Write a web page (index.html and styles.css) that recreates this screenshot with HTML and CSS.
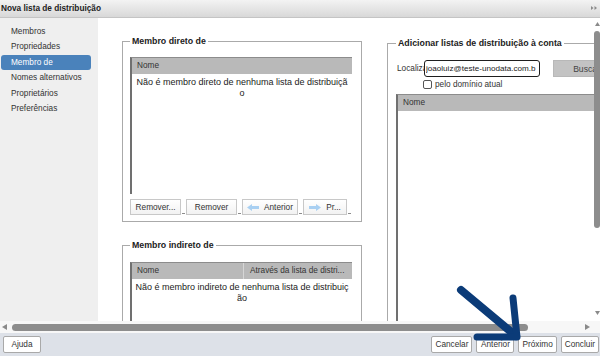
FILE: index.html
```html
<!DOCTYPE html>
<html lang="pt">
<head>
  <meta charset="UTF-8">
  <meta name="viewport" content="width=device-width, initial-scale=1.0">
  <title>Nova lista de distribuição</title>
  <link rel="stylesheet" href="styles.css">
</head>
<body>

<div class="window">
  <div class="titlebar">
    <span>Nova lista de distribuição</span>
    <svg class="collapse" width="6" height="4" viewBox="0 0 6 4">
      <polygon points="0,0 2.5,2 0,4" fill="#8a8a8a"/>
      <polygon points="3.5,0 6,2 3.5,4" fill="#8a8a8a"/>
    </svg>
  </div>

  <div class="body">
    <ul class="nav">
      <li>Membros</li>
      <li>Propriedades</li>
      <li class="active">Membro de</li>
      <li>Nomes alternativos</li>
      <li>Proprietários</li>
      <li>Preferências</li>
    </ul>

    <div class="main">
      <div class="content">
        <div class="col-left">
          <fieldset class="group direct">
            <legend>Membro direto de</legend>
            <div class="list list-direct">
              <div class="list-head">
                <div class="cell">Nome</div>
              </div>
              <div class="list-body">Não é membro direto de nenhuma lista de distribuiçã<br>o</div>
            </div>
            <div class="toolbar">
              <button class="tool-btn">Remover...</button>
              <span class="sep"></span>
              <button class="tool-btn">Remover</button>
              <span class="sep"></span>
              <button class="tool-btn nav-prev">
                <svg width="12" height="7" viewBox="0 0 12 7"><polygon points="0,3.5 5,0 5,2 12,2 12,5 5,5 5,7" fill="#a9d0f2"/></svg>
                Anterior
              </button>
              <span class="sep"></span>
              <button class="tool-btn nav-next">
                <svg width="12" height="7" viewBox="0 0 12 7"><polygon points="12,3.5 7,0 7,2 0,2 0,5 7,5 7,7" fill="#a9d0f2"/></svg>
                Pr...
              </button>
              <span class="sep"></span>
            </div>
          </fieldset>

          <fieldset class="group indirect">
            <legend>Membro indireto de</legend>
            <div class="list list-indirect">
              <div class="list-head">
                <div class="cell cell-name">Nome</div>
                <div class="cell cell-via">Através da lista de distri...</div>
              </div>
              <div class="list-body">Não é membro indireto de nenhuma lista de distribuiç<br>ão</div>
            </div>
          </fieldset>
        </div>

        <div class="col-right">
          <fieldset class="group add">
            <legend>Adicionar listas de distribuição à conta</legend>
            <div class="search-row">
              <label class="search-label" for="query">Localizar:</label>
              <input id="query" class="search-input" type="text" value="joaoluiz@teste-unodata.com.b" spellcheck="false">
              <button class="search-btn">Buscar</button>
            </div>
            <div class="check-row">
              <input id="domain" type="checkbox">
              <label for="domain">pelo domínio atual</label>
            </div>
            <div class="list list-results">
              <div class="list-head">
                <div class="cell">Nome</div>
              </div>
              <div class="list-body"></div>
            </div>
          </fieldset>
        </div>
      </div>

      <div class="vscroll">
        <svg width="5" height="4" viewBox="0 0 5 4"><polygon points="2.5,0 5,4 0,4" fill="#8a8a8a"/></svg>
        <div class="vthumb"></div>
        <svg class="down" width="5" height="4" viewBox="0 0 5 4"><polygon points="0,0 5,0 2.5,4" fill="#8a8a8a"/></svg>
      </div>
    </div>
  </div>

  <div class="hscroll">
    <svg width="5" height="6" viewBox="0 0 5 6"><polygon points="0,3 5,0 5,6" fill="#8a8a8a"/></svg>
    <div class="hthumb"></div>
    <svg class="right" width="5" height="6" viewBox="0 0 5 6"><polygon points="5,3 0,0 0,6" fill="#8a8a8a"/></svg>
  </div>

  <div class="footer">
    <button class="dlg-btn">Ajuda</button>
    <div class="actions">
      <button class="dlg-btn">Cancelar</button>
      <button class="dlg-btn">Anterior</button>
      <button class="dlg-btn">Próximo</button>
      <button class="dlg-btn">Concluir</button>
    </div>
  </div>

  <!-- annotation arrow drawn over the dialog -->
  <svg class="pointer" width="80" height="70" viewBox="0 0 80 70">
    <g fill="none" stroke="#0b3b78" stroke-linecap="round" stroke-linejoin="round">
      <path d="M11 10 L66 56" stroke-width="8"/>
      <path d="M63 18 L67 57 L27 57" stroke-width="7"/>
    </g>
  </svg>
</div>

</body>
</html>
```

FILE: styles.css
```css
* {
  box-sizing: border-box;
}

body {
  margin: 0;
  font-family: "Liberation Sans", Arial, sans-serif;
  color: #333;
  background: #fff;
}

.window {
  position: relative;
  width: 600px;
  height: 356px;
  display: flex;
  flex-direction: column;
  overflow: hidden;
}

.titlebar {
  height: 18px;
  flex-shrink: 0;
  display: flex;
  align-items: center;
  justify-content: space-between;
  padding: 0 3px 1px 1px;
  background: linear-gradient(#f3f3f3, #d8d8d8);
  border-bottom: 1px solid #c4c4c4;
  font-size: 8.25px;
  font-weight: bold;
  color: #222;
}

.body {
  flex: 1;
  display: flex;
  overflow: hidden;
}

.nav {
  width: 98px;
  flex-shrink: 0;
  margin: 0;
  padding: 5.5px 0 0;
  list-style: none;
  background: #efefef;
}

.nav li {
  width: 90px;
  height: 15.6px;
  margin-left: 1px;
  padding-left: 10px;
  line-height: 15.6px;
  font-size: 8.25px;
  color: #333;
  border-radius: 3px;
}

.nav li.active {
  background: #4a82bb;
  color: #fff;
}

.main {
  flex: 1;
  display: flex;
  overflow: hidden;
}

.content {
  flex: 1;
  display: flex;
  align-items: flex-start;
  overflow: hidden;
}

.col-left {
  width: 240px;
  margin-left: 24px;
  flex-shrink: 0;
}

.col-right {
  width: 250px;
  margin-left: 25px;
  flex-shrink: 0;
}

.group {
  margin: 0;
  min-width: 0;
  border: 1px solid #aaa;
  padding: 10px 9px 6px 7px;
}

.group legend {
  padding: 0 2px;
  font-size: 8.8px;
  font-weight: bold;
  line-height: 12px;
  color: #222;
}

.direct {
  margin-top: 17px;
}

.indirect {
  margin-top: 17px;
  padding-top: 11px;
  height: 120px;
}

.add {
  margin-top: 19px;
  padding: 11px 0 0 8px;
}

.list {
  border-left: 2px solid #707070;
  border-top: 1px solid #8c8c8c;
  background: #fff;
}

.list-head {
  height: 16px;
  display: flex;
  background: #b9b9b9;
  font-size: 8.25px;
  line-height: 16px;
  color: #333;
}

.list-head .cell {
  padding-left: 5px;
}

.list-head .cell-name {
  width: 111px;
}

.list-head .cell-via {
  flex: 1;
  padding-left: 6px;
  border-left: 1px solid #d6d6d6;
}

.list-body {
  padding-top: 3px;
  text-align: center;
  font-size: 9px;
  line-height: 11px;
  color: #222;
  white-space: nowrap;
}

.list-direct .list-body {
  height: 120px;
}

.list-indirect .list-body {
  height: 60px;
}

.list-results .list-body {
  height: 240px;
}

.toolbar {
  display: flex;
  align-items: flex-end;
  margin-top: 5px;
}

.tool-btn {
  width: 52px;
  height: 16px;
  padding: 0;
  display: flex;
  align-items: center;
  justify-content: center;
  gap: 5px;
  border: 1px solid #c8c8c8;
  background: linear-gradient(#fff, #f2f2f2);
  font-family: inherit;
  font-size: 8.25px;
  color: #333;
}

.tool-btn.nav-prev {
  width: 57px;
}

.tool-btn.nav-next {
  width: 45px;
}

.sep {
  width: 5px;
  height: 3px;
  display: flex;
  justify-content: center;
}

.sep::after {
  content: "";
  width: 3px;
  height: 1px;
  margin-top: 1px;
  background: #8c8c8c;
}

.search-row {
  display: flex;
  align-items: center;
  height: 17px;
}

.search-label {
  width: 28px;
  padding-left: 1px;
  overflow: hidden;
  white-space: nowrap;
  font-size: 8.25px;
  color: #333;
}

.search-input {
  width: 116px;
  height: 17px;
  margin: 0;
  padding: 0 0 0 1px;
  border: 1.5px solid #1e1e1e;
  border-radius: 3px;
  font-family: inherit;
  font-size: 8.1px;
  color: #222;
  outline: none;
}

.search-btn {
  width: 67px;
  height: 17px;
  margin-left: 13px;
  padding: 0;
  border: 1px solid #b8b8b8;
  background: #c3c3c3;
  font-family: inherit;
  font-size: 8.6px;
  color: #444;
}

.check-row {
  display: flex;
  align-items: center;
  height: 11px;
  margin-top: 2px;
  padding-left: 27px;
  font-size: 8.25px;
  color: #333;
}

.check-row input {
  appearance: none;
  width: 9px;
  height: 9px;
  margin: 0 3px 0 0;
  border: 1px solid #555;
  border-radius: 2px;
  background: #fff;
}

.list-results {
  margin-top: 4px;
}

.vscroll {
  width: 6px;
  flex-shrink: 0;
  display: flex;
  flex-direction: column;
  align-items: center;
  padding-top: 4px;
  background: #fff;
}

.vthumb {
  width: 6px;
  height: 197px;
  margin-top: 5px;
  border-radius: 3px;
  background: #8d8d8d;
}

.vscroll .down {
  margin-top: auto;
  margin-bottom: 6px;
}

.hscroll {
  height: 12px;
  flex-shrink: 0;
  display: flex;
  align-items: center;
  padding: 0 10px 0 2px;
  background: #f7f7f7;
}

.hthumb {
  width: 516px;
  height: 7px;
  margin-left: 5px;
  border-radius: 4px;
  background: #8d8d8d;
}

.hscroll .right {
  margin-left: auto;
}

.footer {
  height: 23px;
  flex-shrink: 0;
  display: flex;
  justify-content: space-between;
  align-items: flex-start;
  padding: 3px 1px 0 3px;
  background: #dde1e8;
}

.actions {
  display: flex;
  gap: 4px;
}

.dlg-btn {
  min-width: 38px;
  height: 17px;
  padding: 0 3px;
  border: 1px solid #a9a9a9;
  border-radius: 2px;
  background: #fff;
  font-family: inherit;
  font-size: 8.25px;
  color: #333;
}

.pointer {
  position: absolute;
  left: 450px;
  top: 280px;
}
```
